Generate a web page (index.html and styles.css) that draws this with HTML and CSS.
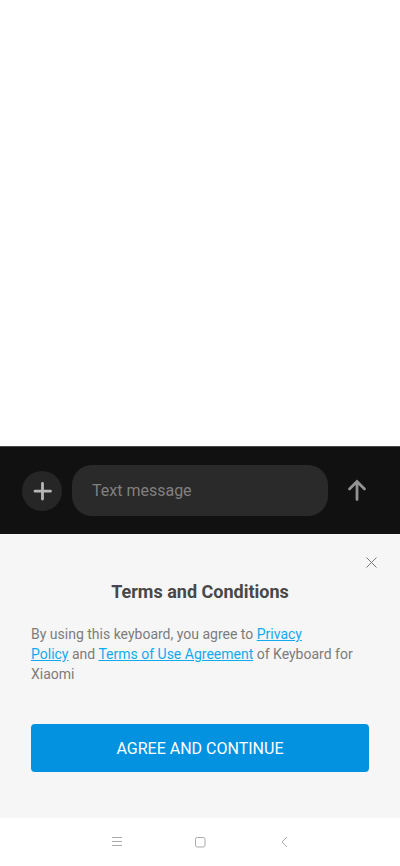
FILE: index.html
```html
<!DOCTYPE html>
<html lang="en">
<head>
<meta charset="utf-8">
<meta name="viewport" content="width=device-width, initial-scale=1">
<title>Messages</title>
<link rel="stylesheet" href="styles.css">
</head>
<body>
<main class="conversation"></main>
<form class="composer">
  <button class="add" type="button" aria-label="Add attachment">
    <svg width="40" height="40" viewBox="0 0 40 40"><path d="M20.500 12.500v15.500M13 20.200h15.500"/></svg>
  </button>
  <input class="message" type="text" placeholder="Text message" aria-label="Text message">
  <button class="send" type="button" aria-label="Send">
    <svg width="20" height="24" viewBox="0 0 20 24"><path d="M9 20.500V3M1.500 10L9 2.500l7.500 7.500"/></svg>
  </button>
</form>
<section class="terms">
  <button class="close" type="button" aria-label="Close">
    <svg width="12" height="12" viewBox="0 0 12 12"><path d="M1.500 1.500l10 10M11.500 1.500l-10 10"/></svg>
  </button>
  <h1 class="title">Terms and Conditions</h1>
  <p class="copy">By using this keyboard, you agree to <a href="#privacy">Privacy<br>Policy</a> and <a href="#terms">Terms of Use Agreement</a> of Keyboard for<br>Xiaomi</p>
  <button class="agree" type="button">AGREE AND CONTINUE</button>
</section>
<nav class="system">
  <button type="button" aria-label="Menu"><svg width="12" height="12" viewBox="0 0 12 12"><path d="M2 1.500h10M2 5.500h10M2 9.500h10"/></svg></button>
  <button type="button" aria-label="Home"><svg width="12" height="12" viewBox="0 0 12 12"><rect x="1.500" y="1.500" width="9.500" height="9.500" rx="1.800"/></svg></button>
  <button type="button" aria-label="Back"><svg width="12" height="12" viewBox="0 0 12 12"><path d="M9 1L4 6l5 5"/></svg></button>
</nav>
</body>
</html>
```
FILE: styles.css
```css
* { box-sizing: border-box; }
body {
  margin: 0;
  min-height: 100vh;
  display: flex;
  flex-direction: column;
  background: #fff;
  font-family: Roboto, sans-serif;
}
button {
  display: flex;
  align-items: center;
  justify-content: center;
  padding: 0;
  border: 0;
  background: none;
  color: inherit;
  font: inherit;
}
svg {
  fill: none;
  stroke: currentColor;
  overflow: visible;
}
.conversation { flex: 1; }
.composer {
  display: flex;
  align-items: center;
  gap: 10px;
  padding: 18px 22px;
  border-top: 1px solid #4a4a4a;
  background: #111;
}
.add {
  border-radius: 50%;
  background: #262626;
  color: #b5b5b5;
}
.add svg,
.send svg {
  stroke-width: 2.8;
  stroke-linecap: round;
}
.message {
  flex: 1;
  min-width: 0;
  height: 51px;
  padding: 0 20px;
  border: 0;
  border-radius: 20px;
  background: #2a2a2a;
  color: #ddd;
  font: 16px Roboto, sans-serif;
}
.message::placeholder { color: #808080; opacity: 1; }
.send {
  width: 40px;
  height: 40px;
  color: #929292;
}
.terms {
  display: flex;
  flex-direction: column;
  padding: 18px 31px 46px;
  background: #f6f6f6;
}
.close {
  align-self: flex-end;
  width: 20px;
  height: 20px;
  margin-right: -12px;
  color: #777;
}
.title {
  margin: 8px 0 20px;
  color: #484848;
  font-size: 18px;
  line-height: 24px;
  font-weight: 700;
  text-align: center;
}
.copy {
  margin: 0 0 40px;
  color: #7c7c7c;
  font-size: 14px;
  line-height: 20px;
}
.copy a { color: #12aaee; }
.agree {
  height: 48px;
  border-radius: 4px;
  background: #0392e0;
  color: #fff;
  font-size: 16px;
}
.system {
  display: flex;
  justify-content: center;
  gap: 60px;
  padding: 12px 0;
  color: #aaa;
}
.system button { width: 24px; height: 24px; }
```
